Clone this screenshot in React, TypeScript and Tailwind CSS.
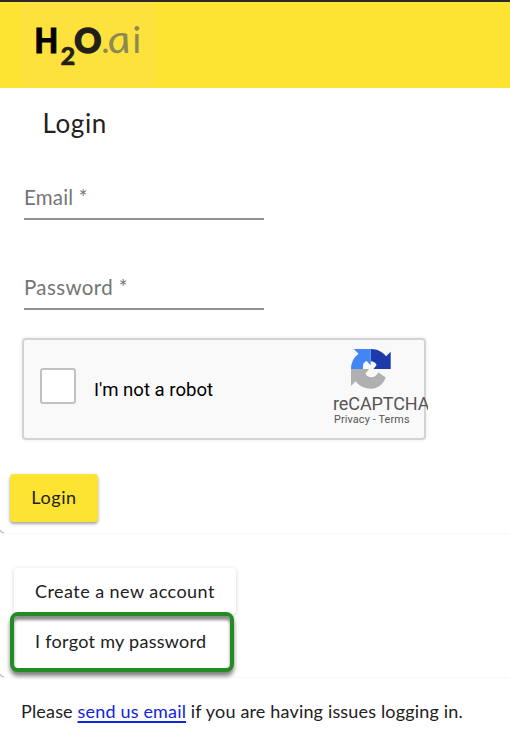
import React from "react";

function Logo() {
  return (
    <svg width="132" height="84" viewBox="22 2 132 84" className="bg-[#fde23d]" role="img" aria-label="H2O.ai">
      <g fontFamily="Lato, sans-serif">
        <text transform="translate(34.6 53) scale(0.92 1)" fontSize="33.2" fontWeight="900" fill="#000" stroke="#000" strokeWidth="1">H</text>
        <text x="60.5" y="64.5" fontSize="25.5" fontWeight="900" fill="#231f1a" stroke="#231f1a" strokeWidth="0.5">2</text>
        <text transform="translate(74.2 53) scale(0.97 1)" fontSize="34.5" fontWeight="900" fill="#231f1a" stroke="#231f1a" strokeWidth="1.5">O</text>
        <text x="101.3" y="52.5" fontSize="35" fill="#8d8950">.</text>
        <text transform="translate(109.6 52.7) skewX(11) scale(1.16 1)" fontSize="39" fontWeight="400" fontStyle="italic" fill="#8d8950">a</text>
        <text x="132.2" y="52.7" fontSize="37.5" fontWeight="400" fill="#8d8950">i</text>
      </g>
    </svg>
  );
}

function RecaptchaMark() {
  return (
    <svg width="40" height="40" viewBox="0 0 64 64">
      <path fill="#1c3aa9" d="M31.5 0C42 0 50.5 4.5 56 11.5L63.5 4.5V32H36l5-6.5c-2-4-5-6-9.5-6Z" />
      <path fill="#4285f4" d="M31.5 0H4.5l7.5 7.500C4.500 13 0 22 0 32h19l.5-8c1.500-2.500 3-4 5.500-5l6.500 7Z" />
      <path fill="#b0b0b0" d="M0 32h29l-6 7c2 4 5.500 6 9.500 6 5 0 8.500-2.500 11-8l12 8.500C51.500 57 42.500 63.500 32 63.500 22 63.500 13 59 7.500 51.500L0 59Z" />
    </svg>
  );
}

function Field({ label, spacing }: { label: string; spacing: string }) {
  return (
    <div className={`flex h-10 w-60 items-start border-b-2 border-[#919191] pt-[5px] text-[20.5px] leading-6 text-[#757575] ${spacing}`}>
      {label}
    </div>
  );
}

function Recaptcha() {
  return (
    <div className="mt-7 ml-[22px] flex h-[102px] w-[404px] rounded border-2 border-[#d3d3d3] bg-[#f9f9f9] font-['Roboto',sans-serif] shadow-[0_0_3px_1px_rgba(0,0,0,0.06)]">
      <div className="mt-7 ml-4 size-9 shrink-0 rounded-[3px] border-2 border-[#c1c1c1] bg-white" />
      <div className="mt-[38px] ml-[18px] w-[220px] shrink-0 text-[18.6px] leading-6 text-black">I'm not a robot</div>
      <div className="ml-[19px] w-[95px] shrink-0 overflow-hidden whitespace-nowrap text-[#555]">
        <div className="mt-[9px] ml-[18px]"><RecaptchaMark /></div>
        <div className="mt-1 text-[18px] leading-[22px] tracking-[-0.1px]">reCAPTCHA</div>
        <div className="-mt-px ml-px text-[10.8px] leading-[11px] tracking-[0.15px]">Privacy - Terms</div>
      </div>
    </div>
  );
}

export default function App() {
  return (
    <div className="h-[732px] w-[510px] overflow-hidden bg-white font-['Lato',sans-serif] text-[#212121]">
      <header className="h-[88px] border-t-2 border-[#292929] bg-[#fee432] pl-[22px]">
        <Logo />
      </header>
      <section className="relative h-[446px] border-b border-[#f8f8f8]">
        <h1 className="pt-[19px] pl-[42.5px] text-[26px] leading-8 tracking-[0.6px]">Login</h1>
        <div className="mt-[41px] ml-6 flex flex-col gap-[50px]">
          <Field label="Email *" spacing="tracking-[0.2px]" />
          <Field label="Password *" spacing="tracking-[0.37px]" />
        </div>
        <Recaptcha />
        <button className="mt-[34px] ml-2.5 block h-12 w-[88px] rounded bg-[#fee432] pb-0.5 text-[18px] tracking-[0.6px] shadow-[0_2px_3px_rgba(0,0,0,0.3),0_1px_4px_rgba(0,0,0,0.1)]">Login</button>
        <span className="absolute bottom-0 left-0 h-[3px] w-1 rounded-bl border-b border-l border-[#bbb]" />
      </section>
      <section className="relative h-36 border-b border-[#f8f8f8] pt-[34px] pl-[10px] text-[18px]">
        <button className="ml-1 block h-[46px] w-[222px] rounded pl-[21px] text-left tracking-[0.45px] shadow-[0_1px_4px_rgba(0,0,0,0.18)]">Create a new account</button>
        <button className="relative -mt-0.5 block h-[60px] w-[224px] rounded-lg border-4 border-[#228b22] bg-white pb-px pl-[21px] text-left tracking-[0.29px] shadow-[0_4px_4px_rgba(0,0,0,0.5),inset_0_4px_3px_rgba(0,0,0,0.45)]">I forgot my password</button>
        <span className="absolute bottom-0 left-0 h-[3px] w-1 rounded-bl border-b border-l border-[#bbb]" />
      </section>
      <p className="mt-[21px] ml-[21px] whitespace-nowrap text-[18px] leading-6 tracking-[0.17px]">
        Please <a href="#" className="text-[#1024dc] underline decoration-2 underline-offset-[3px]">send us email</a> if you are having issues logging in.
      </p>
    </div>
  );
}
